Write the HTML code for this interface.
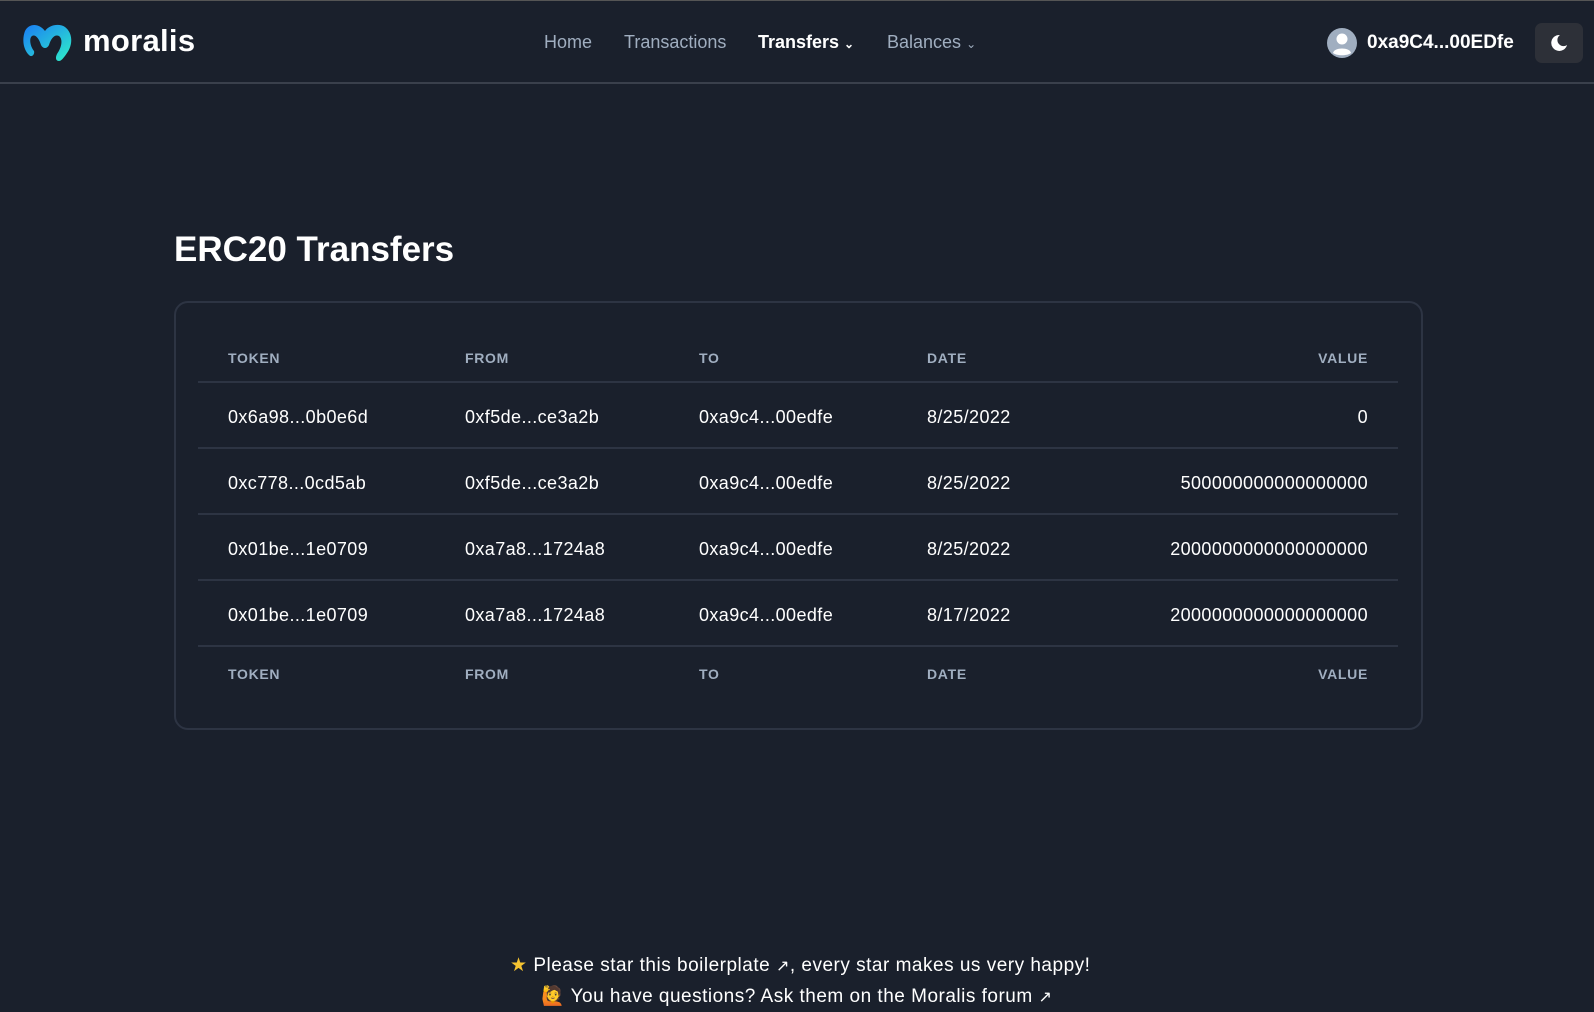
<!DOCTYPE html>
<html><head><meta charset="utf-8"><style>
*{box-sizing:border-box;margin:0;padding:0}
body{width:1594px;height:1012px;background:#1a202c;font-family:"Liberation Sans",sans-serif;color:#fff;position:relative;overflow:hidden;border-top:1px solid #555}
.hdr{position:absolute;left:0;top:0;width:1594px;height:83px;border-bottom:2px solid #3a404c}
.a{position:absolute;white-space:nowrap}
.nav{font-size:18px;color:#a0aec0;top:31px}
.card{position:absolute;left:174px;top:300px;width:1249px;height:429px;border:2px solid #2d3443;border-radius:14px}
.th{font-size:14px;font-weight:bold;color:#a0aec0;letter-spacing:.7px}
.td{font-size:18px;color:#fff;letter-spacing:.4px}
.ln{position:absolute;left:198px;width:1200px;height:2px;background:#2d3443}
.ft{font-size:19px;color:#fff;letter-spacing:.5px}
</style></head><body>
<div class="hdr"></div>
<svg class="a" style="left:21px;top:20px" width="53" height="44" viewBox="0 0 53 44">
<defs><linearGradient id="g" x1="0" y1="0" x2="1" y2="1"><stop offset="0" stop-color="#1a7cf5"/><stop offset="1" stop-color="#2ff0c8"/></linearGradient></defs>
<path d="M8 34 C2 28 1 18 4 10 C8 2 18 2 24 10 C28 4 38 2 44 6 C52 12 52 24 46 32 C42 38 40 40 38 40 C35 40 34 37 36 33 C41 26 42 18 38 15 C34 13 30 17 28 24 C26 28 22 28 20 24 C18 17 14 13 11 15 C8 17 9 25 13 30 C14 33 11 37 8 34Z" fill="url(#g)"/></svg>
<div class="a" style="left:83px;top:22px;font-size:31px;font-weight:bold;letter-spacing:.3px">moralis</div>
<div class="a nav" style="left:544px">Home</div>
<div class="a nav" style="left:624px">Transactions</div>
<div class="a nav" style="left:758px;color:#fff;font-weight:bold">Transfers <span style="font-size:12px">&#8964;</span></div>
<div class="a nav" style="left:887px">Balances <span style="font-size:12px">&#8964;</span></div>
<svg class="a" style="left:1327px;top:27px" width="30" height="30" viewBox="0 0 30 30"><circle cx="15" cy="15" r="15" fill="#a0aec0"/><circle cx="15" cy="11" r="5.5" fill="#fff"/><path d="M6 25 C7 19 23 19 24 25 C20 28 10 28 6 25Z" fill="#fff"/></svg>
<div class="a" style="left:1367px;top:31px;font-size:19px;font-weight:bold">0xa9C4...00EDfe</div>
<div class="a" style="left:1535px;top:22px;width:48px;height:40px;background:#2d3038;border-radius:7px"></div>
<svg class="a" style="left:1550px;top:33px" width="18" height="18" viewBox="0 0 18 18"><path d="M10 1 A8 8 0 1 0 17 11 A6 6 0 0 1 10 1Z" fill="#fff"/></svg>
<div class="a" style="left:174px;top:229px;font-size:35px;font-weight:bold">ERC20 Transfers</div>
<div class="card"></div>
<div class="a th" style="left:228px;top:349px">TOKEN</div><div class="a th" style="left:465px;top:349px">FROM</div><div class="a th" style="left:699px;top:349px">TO</div><div class="a th" style="left:927px;top:349px">DATE</div><div class="a th" style="right:226px;top:349px">VALUE</div>
<div class="ln" style="top:380px"></div>
<div class="a td" style="left:228px;top:406px">0x6a98...0b0e6d</div><div class="a td" style="left:465px;top:406px">0xf5de...ce3a2b</div><div class="a td" style="left:699px;top:406px">0xa9c4...00edfe</div><div class="a td" style="left:927px;top:406px">8/25/2022</div><div class="a td" style="right:226px;top:406px">0</div>
<div class="ln" style="top:446px"></div>
<div class="a td" style="left:228px;top:472px">0xc778...0cd5ab</div><div class="a td" style="left:465px;top:472px">0xf5de...ce3a2b</div><div class="a td" style="left:699px;top:472px">0xa9c4...00edfe</div><div class="a td" style="left:927px;top:472px">8/25/2022</div><div class="a td" style="right:226px;top:472px">500000000000000000</div>
<div class="ln" style="top:512px"></div>
<div class="a td" style="left:228px;top:538px">0x01be...1e0709</div><div class="a td" style="left:465px;top:538px">0xa7a8...1724a8</div><div class="a td" style="left:699px;top:538px">0xa9c4...00edfe</div><div class="a td" style="left:927px;top:538px">8/25/2022</div><div class="a td" style="right:226px;top:538px">2000000000000000000</div>
<div class="ln" style="top:578px"></div>
<div class="a td" style="left:228px;top:604px">0x01be...1e0709</div><div class="a td" style="left:465px;top:604px">0xa7a8...1724a8</div><div class="a td" style="left:699px;top:604px">0xa9c4...00edfe</div><div class="a td" style="left:927px;top:604px">8/17/2022</div><div class="a td" style="right:226px;top:604px">2000000000000000000</div>
<div class="ln" style="top:644px"></div>
<div class="a th" style="left:228px;top:665px">TOKEN</div><div class="a th" style="left:465px;top:665px">FROM</div><div class="a th" style="left:699px;top:665px">TO</div><div class="a th" style="left:927px;top:665px">DATE</div><div class="a th" style="right:226px;top:665px">VALUE</div>
<div class="a ft" style="left:510px;top:953px"><span style="color:#f6c431">★</span> Please star this boilerplate <span style="font-size:16px">↗</span>, every star makes us very happy!</div>
<div class="a ft" style="left:541px;top:983px">🙋 You have questions? Ask them on the Moralis forum <span style="font-size:16px">↗</span></div>
</body></html>
